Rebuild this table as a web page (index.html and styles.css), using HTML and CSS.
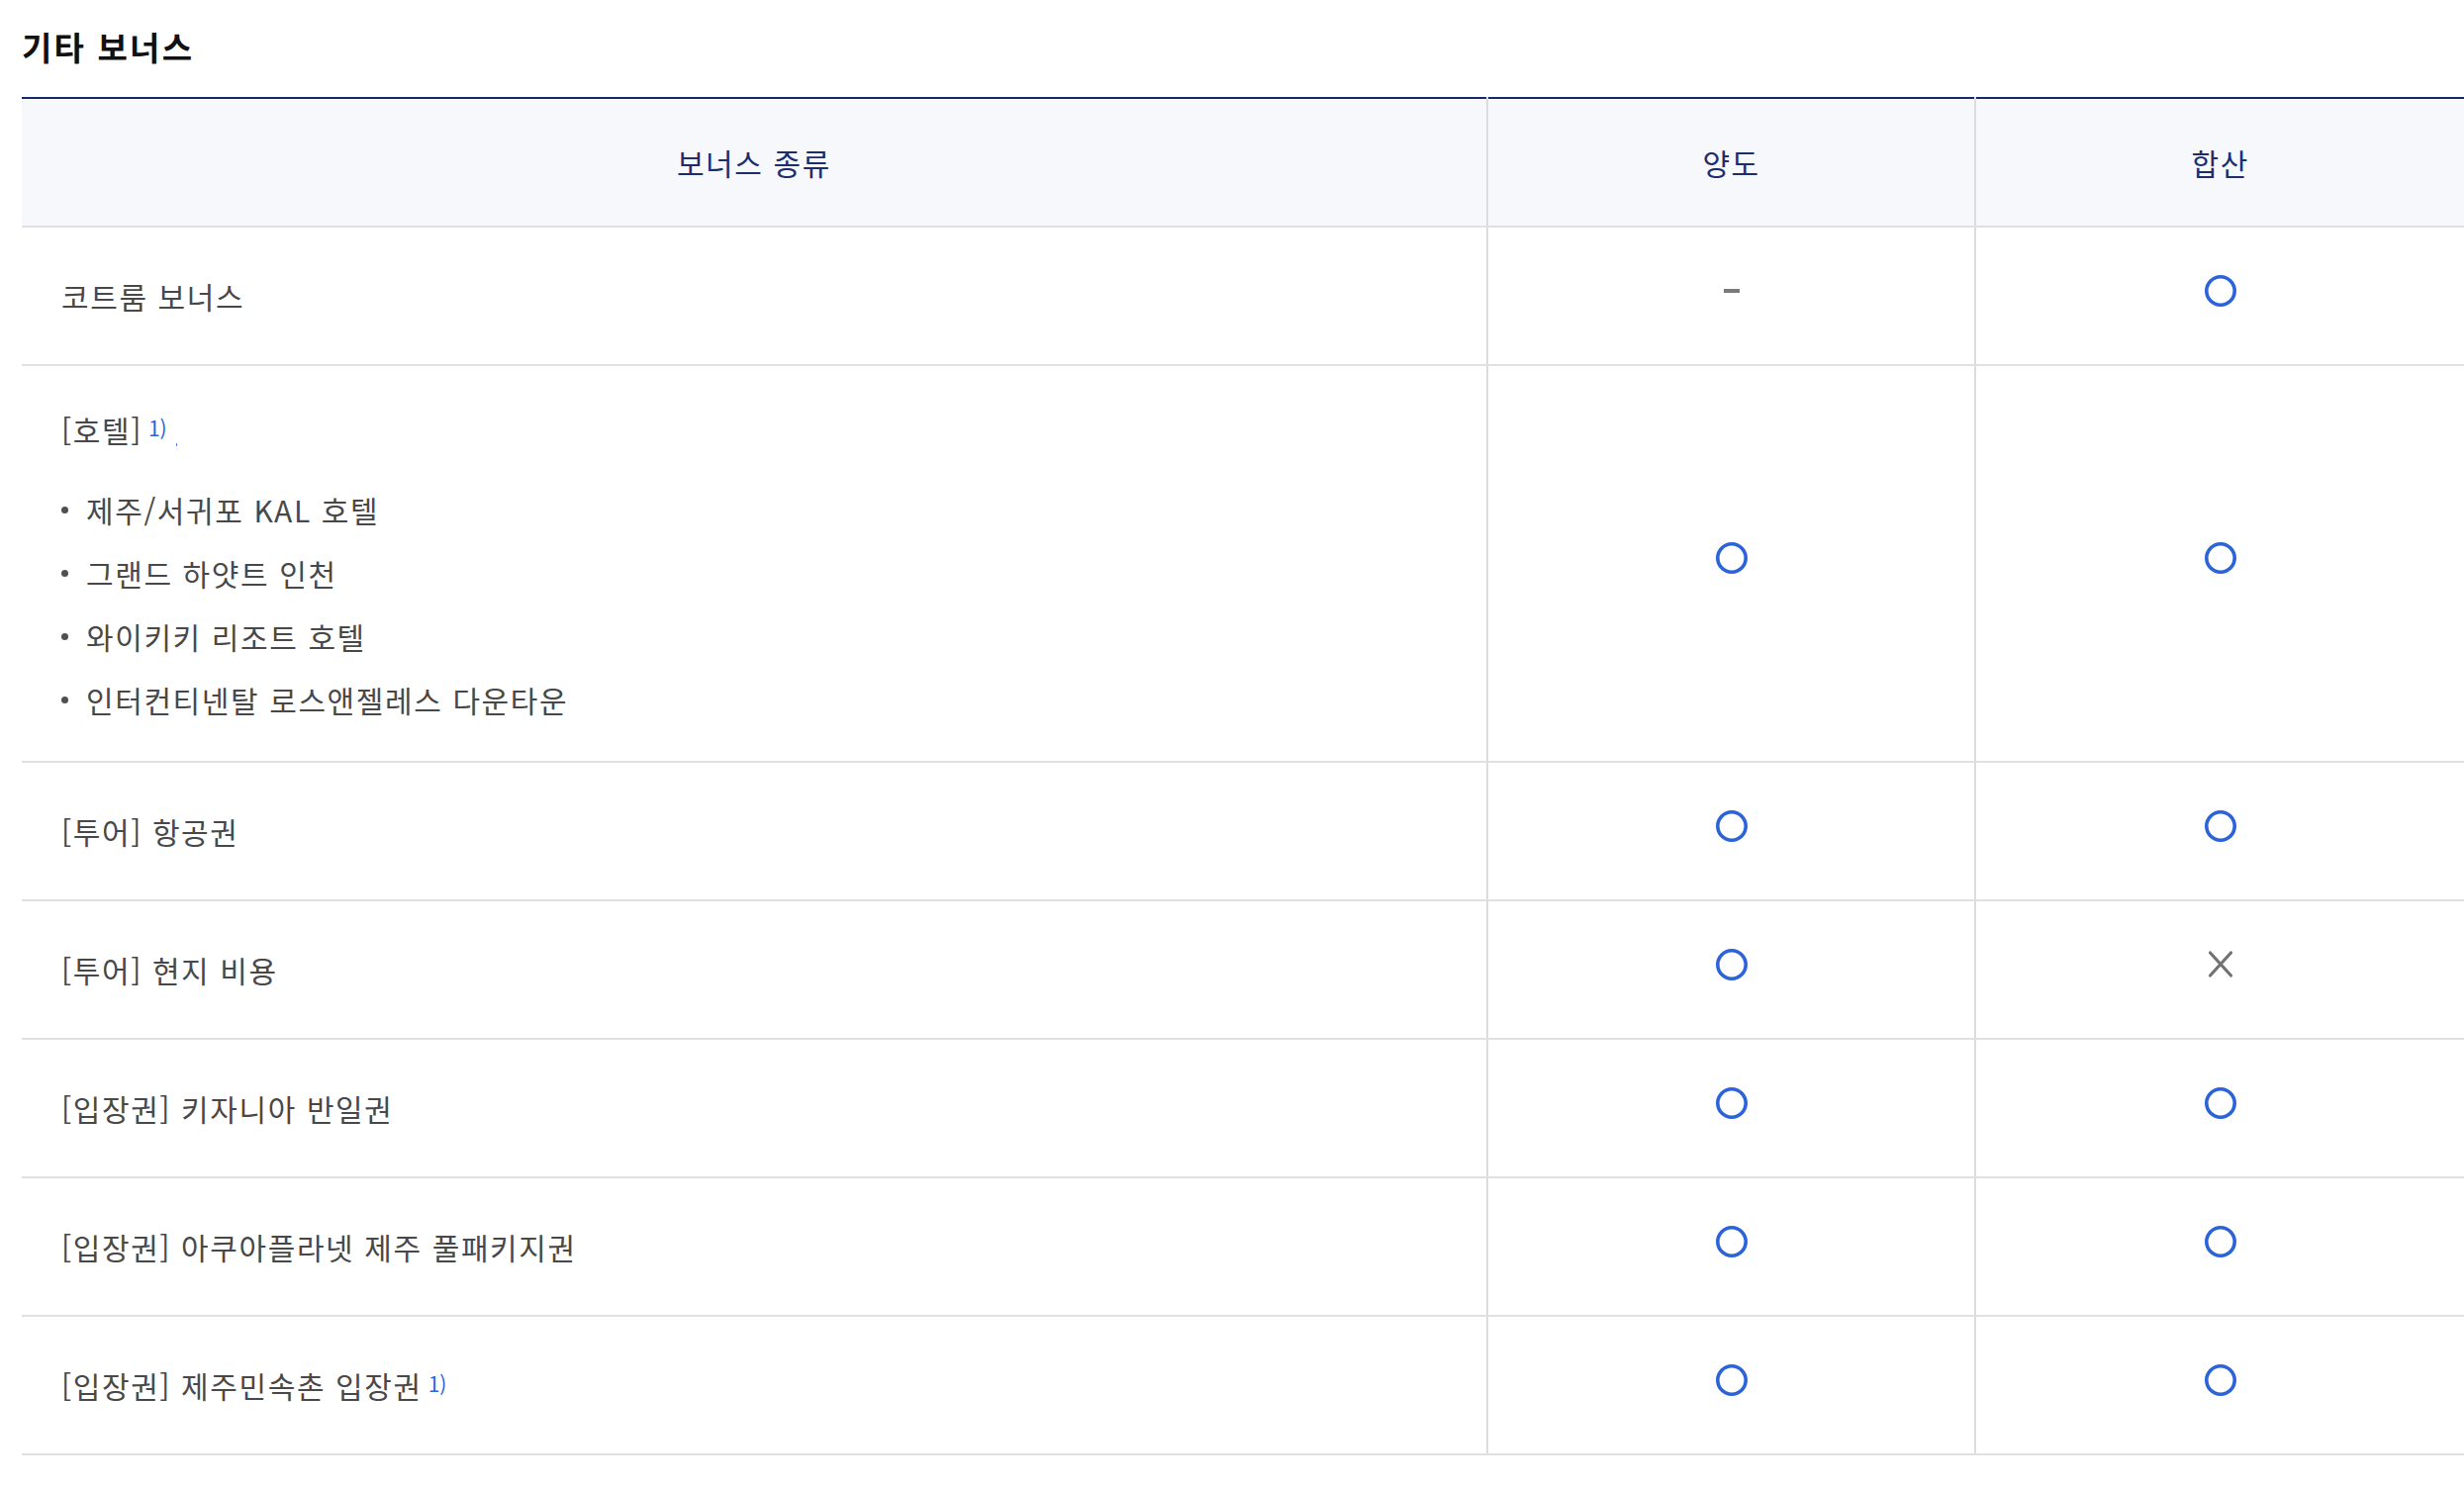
FILE: index.html
```html
<!DOCTYPE html>
<html lang="ko">
<head>
<meta charset="utf-8">
<title>기타 보너스</title>
<link rel="stylesheet" href="styles.css">
</head>
<body>
<section class="section">
  <h2 class="title">기타 보너스</h2>
  <table class="tbl">
    <colgroup>
      <col class="c-type">
      <col class="c-mark">
      <col class="c-mark">
    </colgroup>
    <thead>
      <tr>
        <th>보너스 종류</th>
        <th>양도</th>
        <th>합산</th>
      </tr>
    </thead>
    <tbody>
      <tr>
        <td class="name">코트룸 보너스</td>
        <td class="mark"><svg class="ico" viewBox="0 0 32 32"><rect class="dash" x="8" y="14" width="16" height="4"/></svg></td>
        <td class="mark"><svg class="ico" viewBox="0 0 32 32"><circle class="o" cx="16" cy="16" r="14.2"/></svg></td>
      </tr>
      <tr>
        <td class="name multi">
          <div class="head">[호텔]<span class="note">1)</span><span class="tick"></span></div>
          <ul class="list">
            <li>제주/서귀포 KAL 호텔</li>
            <li>그랜드 하얏트 인천</li>
            <li>와이키키 리조트 호텔</li>
            <li>인터컨티넨탈 로스앤젤레스 다운타운</li>
          </ul>
        </td>
        <td class="mark"><svg class="ico" viewBox="0 0 32 32"><circle class="o" cx="16" cy="16" r="14.2"/></svg></td>
        <td class="mark"><svg class="ico" viewBox="0 0 32 32"><circle class="o" cx="16" cy="16" r="14.2"/></svg></td>
      </tr>
      <tr>
        <td class="name">[투어] 항공권</td>
        <td class="mark"><svg class="ico" viewBox="0 0 32 32"><circle class="o" cx="16" cy="16" r="14.2"/></svg></td>
        <td class="mark"><svg class="ico" viewBox="0 0 32 32"><circle class="o" cx="16" cy="16" r="14.2"/></svg></td>
      </tr>
      <tr>
        <td class="name">[투어] 현지 비용</td>
        <td class="mark"><svg class="ico" viewBox="0 0 32 32"><circle class="o" cx="16" cy="16" r="14.2"/></svg></td>
        <td class="mark"><svg class="ico" viewBox="0 0 32 32"><path class="x" d="M5.5 4 L26.5 27 M26.5 4 L5.5 27"/></svg></td>
      </tr>
      <tr>
        <td class="name">[입장권] 키자니아 반일권</td>
        <td class="mark"><svg class="ico" viewBox="0 0 32 32"><circle class="o" cx="16" cy="16" r="14.2"/></svg></td>
        <td class="mark"><svg class="ico" viewBox="0 0 32 32"><circle class="o" cx="16" cy="16" r="14.2"/></svg></td>
      </tr>
      <tr>
        <td class="name">[입장권] 아쿠아플라넷 제주 풀패키지권</td>
        <td class="mark"><svg class="ico" viewBox="0 0 32 32"><circle class="o" cx="16" cy="16" r="14.2"/></svg></td>
        <td class="mark"><svg class="ico" viewBox="0 0 32 32"><circle class="o" cx="16" cy="16" r="14.2"/></svg></td>
      </tr>
      <tr>
        <td class="name">[입장권] 제주민속촌 입장권<span class="note">1)</span></td>
        <td class="mark"><svg class="ico" viewBox="0 0 32 32"><circle class="o" cx="16" cy="16" r="14.2"/></svg></td>
        <td class="mark"><svg class="ico" viewBox="0 0 32 32"><circle class="o" cx="16" cy="16" r="14.2"/></svg></td>
      </tr>
    </tbody>
  </table>
</section>
</body>
</html>
```
FILE: styles.css
```css
html, body {
  margin: 0;
  padding: 0;
  background: #ffffff;
}

body {
  font-family: "Noto Sans CJK KR", "Noto Sans", sans-serif;
  color: #484848;
}

.section {
  padding: 0 0 0 22px;
}

.title {
  margin: 27px 0 31px;
  font-size: 33px;
  line-height: 40px;
  font-weight: 700;
  letter-spacing: 2.2px;
  color: #111111;
}

.tbl {
  width: 100%;
  border-collapse: collapse;
  table-layout: fixed;
  border-top: 2px solid #13296b;
}

.c-type { width: 60%; }
.c-mark { width: 20%; }

.tbl th {
  height: 48px;
  padding: 40px 0;
  background: #f6f8fc;
  color: #1c2d6b;
  font-size: 30px;
  line-height: 48px;
  font-weight: 400;
  letter-spacing: 1.6px;
  text-align: center;
  border-bottom: 2px solid #e0e0e0;
}

.tbl th + th,
.tbl td + td {
  border-left: 2px solid #dcdcdc;
}

.tbl td {
  padding: 45px 40px;
  font-size: 30px;
  line-height: 48px;
  letter-spacing: 1.6px;
  border-bottom: 2px solid #e0e0e0;
  vertical-align: middle;
}

.tbl td.multi {
  padding: 40px 40px 38px;
}

.tbl td.mark {
  padding: 45px 0;
  text-align: center;
}

.ico {
  display: block;
  width: 32px;
  height: 32px;
  margin: 0 auto 11px;
}

.o {
  fill: none;
  stroke: #2c63d8;
  stroke-width: 3.6;
}

.dash {
  fill: #7a7a7a;
}

.x {
  fill: none;
  stroke: #727272;
  stroke-width: 3.2;
  stroke-linecap: round;
}

.note {
  margin-left: 6px;
  font-size: 21px;
  line-height: 1;
  letter-spacing: 0;
  color: #2c63d8;
  vertical-align: 6px;
}

.tick {
  display: inline-block;
  width: 1px;
  height: 3px;
  margin-left: 9px;
  background: #5a7fe0;
  vertical-align: -4px;
}

.list {
  list-style: none;
  margin: 33px 0 0;
  padding: 0;
}

.list li {
  display: flex;
  align-items: center;
  line-height: 48px;
}

.list li + li {
  margin-top: 16px;
}

.list li::before {
  content: "";
  flex: none;
  width: 7px;
  height: 7px;
  margin: 0 18px 0 0;
  border-radius: 50%;
  background: #505050;
}
```
